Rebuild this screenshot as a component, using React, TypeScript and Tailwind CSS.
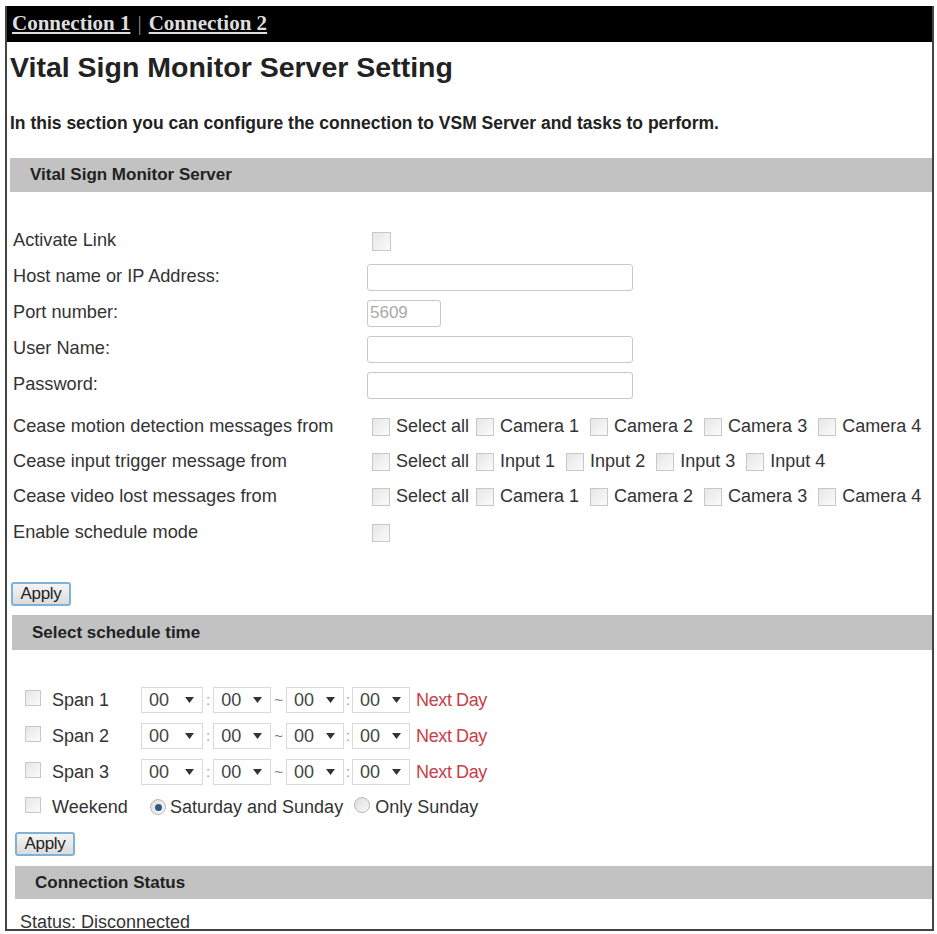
import React from 'react'

const Box = ({ size = 18 }: { size?: number }) => (
  <span
    className="inline-block shrink-0 border border-[#c8c8c8] bg-gradient-to-br from-[#e6e6e6] to-[#fbfbfb]"
    style={{ width: size, height: size }}
  />
)

const Radio = ({ on }: { on?: boolean }) => (
  <span className="inline-flex h-[16px] w-[16px] shrink-0 items-center justify-center rounded-full border border-[#b8b8b8] bg-gradient-to-br from-[#dcdcdc] to-[#fafafa]">
    {on && <span className="h-[7px] w-[7px] rounded-full bg-[#2e5b86]" />}
  </span>
)

const CheckList = ({ items }: { items: string[] }) => (
  <div className="flex items-center">
    {items.map((t, i) => (
      <span
        key={t}
        className={`flex items-center gap-[6px] ${i === 0 ? 'ml-[5px]' : i === 1 ? 'ml-[7px]' : 'ml-[11px]'}`}
      >
        <Box />
        <span className="whitespace-nowrap">{t}</span>
      </span>
    ))}
  </div>
)

const Header = ({ title, h = 34 }: { title: string; h?: number }) => (
  <div
    className="flex items-center bg-[#c2c2c2] pl-[20px] text-[17px] font-bold text-[#222]"
    style={{ height: h }}
  >
    {title}
  </div>
)

const ApplyButton = () => (
  <button className="h-[24px] w-[60px] rounded-[3px] border-2 border-[#7fb2d6] bg-gradient-to-b from-[#f4f4f4] to-[#dcdcdc] text-[17px] leading-none tracking-[-0.3px] text-[#222]">
    Apply
  </button>
)

const Select = ({ w = 60 }: { w?: number }) => (
  <span
    className="flex h-[26px] items-center justify-between border border-[#dadada] bg-white pl-[7px] pr-[8px] text-[#444]"
    style={{ width: w }}
  >
    <span>00</span>
    <svg width="9" height="6" viewBox="0 0 9 6">
      <path d="M0 0h9L4.5 6z" fill="#333" />
    </svg>
  </span>
)

const TimeRow = ({ label }: { label: string }) => (
  <div className="flex h-[36px] items-center">
    <span className="ml-[15px]"><Box size={16} /></span>
    <span className="ml-[11px] w-[89px]">{label}</span>
    <Select w={62} />
    <span className="mx-[3px] text-[15px] text-[#999]">:</span>
    <Select w={58} />
    <span className="mx-[3px] text-[15px] text-[#777]">~</span>
    <Select w={58} />
    <span className="mx-[2px] text-[15px] text-[#999]">:</span>
    <Select w={58} />
    <span className="ml-[6px] tracking-[-0.4px] text-[#c8404a]">Next Day</span>
  </div>
)

export default function App() {
  const rowLabel = 'pl-[3px] text-[#333] whitespace-nowrap'
  return (
    <div className="min-h-[934px] bg-white pt-[6px] font-['Liberation_Sans',Arial,sans-serif] text-[18px]">
      <div className="mx-[5px] mr-[3px] h-[925px] overflow-hidden border-x-2 border-b-2 border-[#444]">
        <div className="flex h-[36px] items-center bg-black pl-[5px] font-['Liberation_Serif',serif] text-[21px] font-bold text-[#ddd]">
          <span className="underline underline-offset-2">Connection 1</span>
          <span className="mx-[7px] font-normal text-[#888]">|</span>
          <span className="underline underline-offset-2">Connection 2</span>
        </div>

        <div className="pl-[3px]">
          <h1 className="pt-[7px] text-[28.5px] font-bold leading-[36px] text-[#222]">Vital Sign Monitor Server Setting</h1>
          <p className="mt-[27px] text-[17.5px] font-bold leading-[22px] text-[#222]">
            In this section you can configure the connection to VSM Server and tasks to perform.
          </p>

          <div className="mt-[24px]">
            <Header title="Vital Sign Monitor Server" />
          </div>

          <div className="mt-[31px] grid grid-cols-[357px_1fr] text-[18.2px] text-[#333]">
            <div className={`${rowLabel} flex h-[36px] items-center`}>Activate Link</div>
            <div className="flex h-[36px] items-center pl-[5px]"><Box size={19} /></div>

            <div className={`${rowLabel} flex h-[36px] items-center`}>Host name or IP Address:</div>
            <div className="flex h-[36px] items-center">
              <input className="h-[27px] w-[266px] rounded-[3px] border border-[#c8c8c8] bg-white" />
            </div>

            <div className={`${rowLabel} flex h-[36px] items-center`}>Port number:</div>
            <div className="flex h-[36px] items-center">
              <input
                disabled
                value="5609"
                readOnly
                className="h-[27px] w-[74px] rounded-[3px] border border-[#c8c8c8] bg-white px-[2px] text-[17px] text-[#aaa]"
              />
            </div>

            <div className={`${rowLabel} flex h-[36px] items-center`}>User Name:</div>
            <div className="flex h-[36px] items-center">
              <input className="h-[27px] w-[266px] rounded-[3px] border border-[#c8c8c8] bg-white" />
            </div>

            <div className={`${rowLabel} flex h-[36px] items-center`}>Password:</div>
            <div className="flex h-[36px] items-center">
              <input type="password" className="h-[27px] w-[266px] rounded-[3px] border border-[#c8c8c8] bg-white" />
            </div>

            <div className={`${rowLabel} mt-[6px] flex h-[35px] items-center`}>Cease motion detection messages from</div>
            <div className="mt-[6px] flex h-[35px] items-center text-[18px]">
              <CheckList items={['Select all', 'Camera 1', 'Camera 2', 'Camera 3', 'Camera 4']} />
            </div>

            <div className={`${rowLabel} flex h-[35px] items-center`}>Cease input trigger message from</div>
            <div className="flex h-[35px] items-center text-[18px]">
              <CheckList items={['Select all', 'Input 1', 'Input 2', 'Input 3', 'Input 4']} />
            </div>

            <div className={`${rowLabel} flex h-[35px] items-center`}>Cease video lost messages from</div>
            <div className="flex h-[35px] items-center text-[18px]">
              <CheckList items={['Select all', 'Camera 1', 'Camera 2', 'Camera 3', 'Camera 4']} />
            </div>

            <div className={`${rowLabel} mt-[1px] flex h-[36px] items-center`}>Enable schedule mode</div>
            <div className="mt-[1px] flex h-[36px] items-center pl-[5px]"><Box /></div>
          </div>

          <div className="mt-[29px] pl-[1px]">
            <ApplyButton />
          </div>

          <div className="mt-[8px] pl-[2px]">
            <Header title="Select schedule time" h={35} />
          </div>

          <div className="mt-[32px] text-[#333]">
            <TimeRow label="Span 1" />
            <TimeRow label="Span 2" />
            <TimeRow label="Span 3" />
            <div className="flex h-[34px] items-center">
              <span className="ml-[15px]"><Box size={16} /></span>
              <span className="ml-[11px] w-[98px]">Weekend</span>
              <Radio on />
              <span className="ml-[4px]">Saturday and Sunday</span>
              <span className="ml-[11px]"><Radio /></span>
              <span className="ml-[5px]">Only Sunday</span>
            </div>
          </div>

          <div className="mt-[6px] pl-[5px]">
            <ApplyButton />
          </div>

          <div className="mt-[9px] pl-[5px]">
            <Header title="Connection Status" h={33} />
          </div>

          <div className="mt-[10px] pl-[10px] text-[#333]">Status: Disconnected</div>
        </div>
      </div>
    </div>
  )
}
